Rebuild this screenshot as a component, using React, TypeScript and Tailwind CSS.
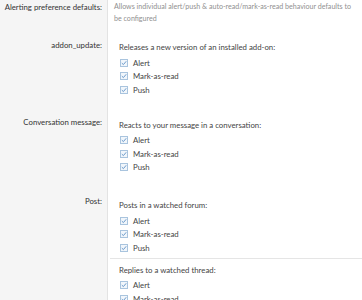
const groups = [
  {
    label: 'addon_update:',
    labelPad: 'pt-[6px]',
    pad: 'pt-[8px] pb-[10px]',
    choices: [{ title: 'Releases a new version of an installed add-on:' }],
  },
  {
    label: 'Conversation message:',
    labelPad: 'pt-[9px]',
    pad: 'pt-[12px] pb-[13px]',
    choices: [{ title: 'Reacts to your message in a conversation:' }],
  },
  {
    label: 'Post:',
    labelPad: 'pt-[8px]',
    pad: 'pt-[12px] pb-[12px]',
    choices: [{ title: 'Posts in a watched forum:' }, { title: 'Replies to a watched thread:' }],
  },
];

const options = ['Alert', 'Mark-as-read', 'Push'];

function Check() {
  return (
    <svg width="8" height="8" viewBox="0 0 8 8" className="shrink-0">
      <rect x="0.5" y="0.5" width="7" height="7" fill="#f1f6fb" stroke="#a9c4de" />
      <path d="M1.8 4.1 L3.4 5.6 L6.2 2.3" fill="none" stroke="#6b9acb" strokeWidth="1" />
    </svg>
  );
}

function Label({ children, className }: { children: React.ReactNode; className?: string }) {
  return (
    <div className={`w-[108px] shrink-0 border-r border-[#e3e3e3] bg-[#f5f5f5] pr-[5px] text-right text-[7.8px] leading-[12px] text-[#333] ${className ?? ''}`}>
      {children}
    </div>
  );
}

export default function App() {
  return (
    <div className="h-[300px] w-[362px] overflow-hidden bg-white" style={{ fontFamily: 'Lato, "Open Sans", sans-serif' }}>
      <div className="flex">
        <Label className="pt-[1px]">Alerting preference defaults:</Label>
        <div className="flex-1 pl-[6px] pr-[4px] pt-[1px] pb-[8px] text-[7.1px] leading-[12px] text-[#909090]">
          Allows individual alert/push &amp; auto-read/mark-as-read behaviour defaults to be configured
        </div>
      </div>
      {groups.map((g) => (
        <div key={g.label} className="flex">
          <Label className={g.labelPad}>{g.label}</Label>
          <div className={`flex-1 pl-[11px] ${g.pad} text-[7.8px] text-[#444]`}>
            {g.choices.map((c, i) => (
              <div key={c.title} className={i > 0 ? 'mt-[3px] -ml-[9px] border-t border-[#e5e5e5] pl-[9px] pt-[5px]' : ''}>
                <div className="leading-[12px]">{c.title}</div>
                <ul className="mt-[3px]">
                  {options.map((o) => (
                    <li key={o} className="flex h-[13.5px] items-center gap-[5px] pl-[1px]">
                      <Check />
                      <span className="leading-[12px]">{o}</span>
                    </li>
                  ))}
                </ul>
              </div>
            ))}
          </div>
        </div>
      ))}
    </div>
  );
}
